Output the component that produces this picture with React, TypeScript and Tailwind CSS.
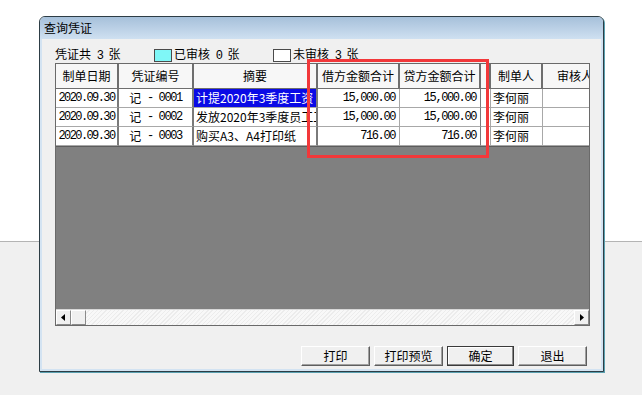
import React from "react";

const rows = [
  { date: "2020.09.30", no: "0001", memo: "计提2020年3季度工资", debit: "15,000.00", credit: "15,000.00", maker: "李何丽", selected: true },
  { date: "2020.09.30", no: "0002", memo: "发放2020年3季度员工工资", debit: "15,000.00", credit: "15,000.00", maker: "李何丽" },
  { date: "2020.09.30", no: "0003", memo: "购买A3、A4打印纸", debit: "716.00", credit: "716.00", maker: "李何丽" },
];

const cjk = "font-['Noto_Sans_CJK_SC',sans-serif]";
const mono = "font-['Liberation_Mono','Noto_Sans_CJK_SC',monospace] text-[12px] tracking-[-1.4px]";

function HeadCell({ w, label }: { w: string; label: string }) {
  return (
    <div className={`${w} shrink-0 h-full flex items-center justify-center border-r-2 border-r-[#6e6e6e] border-b border-b-[#6e6e6e] bg-[#f7f7f7] whitespace-nowrap overflow-hidden`}>
      {label}
    </div>
  );
}

function Btn({ label, primary }: { label: string; primary?: boolean }) {
  return (
    <button
      className={`h-[20px] flex items-center justify-center bg-[#f0f0f0] text-[12px] text-black border ${
        primary
          ? "w-[67px] border-[#3a3a3a] shadow-[inset_-1px_-1px_0_#8a8a8a,inset_1px_1px_0_#ffffff]"
          : "w-[69px] border-t-white border-l-white border-r-[#5e5e5e] border-b-[#5e5e5e] shadow-[inset_-1px_-1px_0_#a0a0a0]"
      }`}
    >
      {label}
    </button>
  );
}

export default function App() {
  return (
    <div className={`relative w-[642px] h-[395px] overflow-hidden ${cjk}`}>
      {/* desktop behind the dialog */}
      <div className="flex flex-col h-full">
        <div className="h-[241px] bg-white" />
        <div className="flex-1 bg-[#f0f0f0] border-t border-[#b4b4b4]" />
      </div>

      {/* dialog */}
      <div className="absolute left-[39px] top-[16px] w-[565px] h-[356px] flex flex-col border border-[#2d3d45] rounded-t-[6px] bg-[#f0f0f0] shadow-[1px_1px_0_#5aa0b0]">
        <div className="h-[22px] shrink-0 flex items-center pl-[4px] rounded-t-[5px] bg-gradient-to-b from-[#a6c0da] to-[#cfe0f1] text-[12px] text-black">
          查询凭证
        </div>
        <div className="flex-1 flex flex-col border-x-2 border-b-2 border-[#d3e3f2] pl-[13px] pt-[8px]">
          {/* legend */}
          <div className="h-[16px] flex items-center text-[12px] text-black">
            <span className="w-[99px]">
              凭证共<span className={`${mono} whitespace-pre`}> 3 </span>张
            </span>
            <span className="w-[18px] h-[13px] bg-[#7ff7f7] border border-[#4a4a4a]" />
            <span className="ml-[2px] w-[99px]">
              已审核<span className={`${mono} whitespace-pre`}> 0 </span>张
            </span>
            <span className="w-[18px] h-[13px] bg-white border border-[#4a4a4a]" />
            <span className="ml-[2px]">
              未审核<span className={`${mono} whitespace-pre`}> 3 </span>张
            </span>
          </div>

          {/* grid */}
          <div className="w-[535px] h-[263px] flex flex-col border border-[#6a6a6a] bg-[#808080] overflow-hidden">
            <div className="h-[25px] shrink-0 flex text-[12px] text-black">
              <HeadCell w="w-[63px]" label="制单日期" />
              <HeadCell w="w-[75px]" label="凭证编号" />
              <HeadCell w="w-[124px]" label="摘要" />
              <HeadCell w="w-[82px]" label="借方金额合计" />
              <HeadCell w="w-[81px]" label="贷方金额合计" />
              <HeadCell w="w-[10px]" label="" />
              <HeadCell w="w-[52px]" label="制单人" />
              <HeadCell w="w-[66px]" label="审核人" />
            </div>
            {rows.map((r) => (
              <div key={r.no} className="h-[19px] shrink-0 flex text-black">
                <div className={`w-[63px] shrink-0 flex items-center justify-center bg-white border-r-2 border-r-[#7a7a7a] border-b border-b-[#a8a8a8] ${mono} tracking-[-1.6px]`}>
                  {r.date}
                </div>
                <div className="w-[75px] shrink-0 flex items-center justify-center bg-white border-r-2 border-r-[#7a7a7a] border-b border-b-[#a8a8a8] text-[12px]">
                  记<span className={`${mono} whitespace-pre`}> - {r.no}</span>
                </div>
                <div
                  className={`w-[124px] shrink-0 flex items-center pl-[2px] overflow-hidden whitespace-nowrap border-r-2 border-r-[#7a7a7a] border-b border-b-[#a8a8a8] text-[12px] ${
                    r.selected ? "bg-[#0a0ae6] text-white" : "bg-white"
                  }`}
                >
                  {r.memo}
                </div>
                <div className={`w-[82px] shrink-0 flex items-center justify-end pr-[4px] bg-white border-r border-r-[#a8a8a8] border-b border-b-[#a8a8a8] ${mono}`}>
                  {r.debit}
                </div>
                <div className={`w-[81px] shrink-0 flex items-center justify-end pr-[4px] bg-white border-r border-r-[#7a7a7a] border-b border-b-[#a8a8a8] ${mono}`}>
                  {r.credit}
                </div>
                <div className="w-[10px] shrink-0 bg-white border-r border-r-[#a8a8a8] border-b border-b-[#a8a8a8]" />
                <div className="w-[52px] shrink-0 flex items-center pl-[2px] bg-white border-r border-r-[#a8a8a8] border-b border-b-[#a8a8a8] text-[12px]">
                  {r.maker}
                </div>
                <div className="w-[66px] shrink-0 bg-white border-b border-b-[#a8a8a8]" />
              </div>
            ))}
            <div className="flex-1 bg-[#808080] border-t border-[#5c5c5c]" />

            {/* horizontal scrollbar */}
            <div className="h-[16px] shrink-0 flex bg-[#f6f6f6] border-t border-[#d8d8d8]">
              <div className="w-[15px] h-full flex items-center justify-center bg-[#f0f0f0] border border-t-white border-l-white border-r-[#8a8a8a] border-b-[#8a8a8a]">
                <svg width="5" height="7" viewBox="0 0 5 7">
                  <path d="M4 0 L0 3.5 L4 7 Z" fill="#000" />
                </svg>
              </div>
              <div className="w-[15px] h-full bg-[#f0f0f0] border border-t-white border-l-white border-r-[#8a8a8a] border-b-[#8a8a8a]" />
              <div className="flex-1 bg-[repeating-linear-gradient(135deg,#f8f8f8_0px,#f8f8f8_2px,#ececec_2px,#ececec_3px)]" />
              <div className="w-[15px] h-full flex items-center justify-center bg-[#f0f0f0] border border-t-white border-l-white border-r-[#8a8a8a] border-b-[#8a8a8a]">
                <svg width="5" height="7" viewBox="0 0 5 7">
                  <path d="M1 0 L5 3.5 L1 7 Z" fill="#000" />
                </svg>
              </div>
            </div>
          </div>

          {/* buttons */}
          <div className="mt-[20px] w-[532px] flex justify-end gap-[4px]">
            <Btn label="打印" />
            <Btn label="打印预览" />
            <Btn label="确定" primary />
            <Btn label="退出" />
          </div>
        </div>
      </div>

      {/* red annotation box */}
      <div className="absolute left-[307px] top-[59px] w-[182px] h-[99px] border-[3px] border-[#f2383a]" />
    </div>
  );
}
